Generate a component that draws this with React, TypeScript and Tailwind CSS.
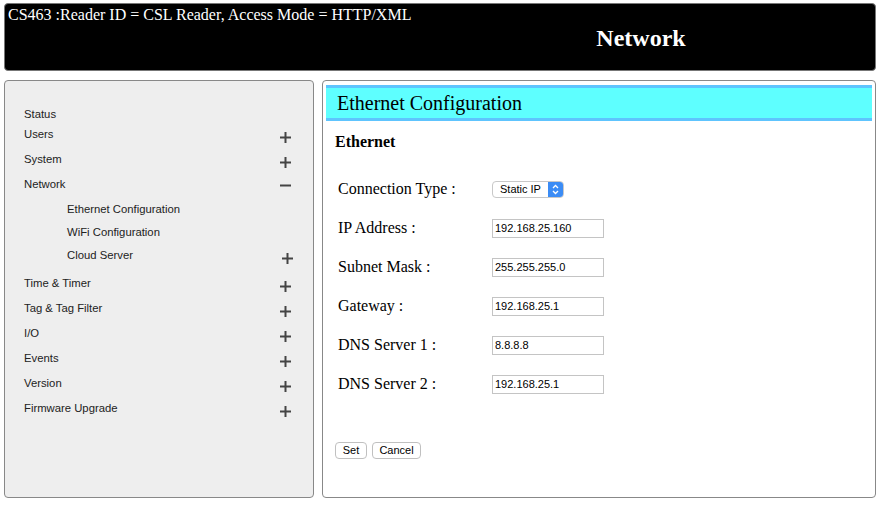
import React from 'react';

const serif = { fontFamily: '"Liberation Serif", "Times New Roman", serif' };
const sans = { fontFamily: '"Liberation Sans", Arial, sans-serif' };

const Plus = () => (
  <svg width="11" height="11" viewBox="0 0 11 11" className="flex-none translate-y-[3px]">
    <rect x="0" y="4.5" width="11" height="2" fill="#444" />
    <rect x="4.5" y="0" width="2" height="11" fill="#444" />
  </svg>
);

const Minus = () => (
  <svg width="11" height="11" viewBox="0 0 11 11" className="flex-none translate-y-[1px]">
    <rect x="0" y="4.5" width="11" height="2" fill="#444" />
  </svg>
);

type Item = { label: string; mt: string; icon?: 'plus' | 'minus'; sub?: boolean };

const menu: Item[] = [
  { label: 'Status', mt: 'mt-0' },
  { label: 'Users', mt: 'mt-[7px]', icon: 'plus' },
  { label: 'System', mt: 'mt-[12px]', icon: 'plus' },
  { label: 'Network', mt: 'mt-[12px]', icon: 'minus' },
  { label: 'Ethernet Configuration', mt: 'mt-[12px]', sub: true },
  { label: 'WiFi Configuration', mt: 'mt-[10px]', sub: true },
  { label: 'Cloud Server', mt: 'mt-[10px]', sub: true, icon: 'plus' },
  { label: 'Time & Timer', mt: 'mt-[15px]', icon: 'plus' },
  { label: 'Tag & Tag Filter', mt: 'mt-[12px]', icon: 'plus' },
  { label: 'I/O', mt: 'mt-[12px]', icon: 'plus' },
  { label: 'Events', mt: 'mt-[12px]', icon: 'plus' },
  { label: 'Version', mt: 'mt-[12px]', icon: 'plus' },
  { label: 'Firmware Upgrade', mt: 'mt-[12px]', icon: 'plus' },
];

const fields = [
  { label: 'IP Address :', value: '192.168.25.160' },
  { label: 'Subnet Mask :', value: '255.255.255.0' },
  { label: 'Gateway :', value: '192.168.25.1' },
  { label: 'DNS Server 1 :', value: '8.8.8.8' },
  { label: 'DNS Server 2 :', value: '192.168.25.1' },
];

export default function App() {
  return (
    <div className="w-[880px] h-[505px] bg-white overflow-hidden">
      {/* header */}
      <div
        className="mx-[4px] mt-[3px] h-[68px] bg-black border border-[#777] rounded-[4px] text-white pl-[3px] pt-[2px]"
        style={serif}
      >
        <div className="text-[16px] leading-[18px]">
          CS463 :Reader ID = CSL Reader, Access Mode = HTTP/XML
        </div>
        <div className="flex">
          <div className="ml-auto w-[468px] text-center text-[24px] font-bold leading-[28px]">
            Network
          </div>
        </div>
      </div>

      <div className="flex mx-[4px] mt-[9px] gap-[8px]">
        {/* side menu */}
        <div
          className="w-[310px] h-[418px] bg-[#eeeeee] border border-[#888] rounded-[4px] pt-[27px] text-[11.3px] text-[#222]"
          style={sans}
        >
          {menu.map((m) => (
            <div
              key={m.label}
              className={`flex items-center h-[13px] leading-[13px] ${m.mt} ${
                m.sub ? 'pl-[62px] pr-[20px]' : 'pl-[19px] pr-[22px]'
              }`}
            >
              <span className="flex-1">{m.label}</span>
              {m.icon === 'plus' && <Plus />}
              {m.icon === 'minus' && <Minus />}
            </div>
          ))}
        </div>

        {/* content */}
        <div className="flex-1 h-[418px] bg-white border border-[#888] rounded-[4px] pt-[4px] px-[3px]">
          <div
            className="h-[36px] bg-[#5effff] border-t-[3px] border-b-[3px] border-[#5ec4fe] pl-[11px] text-[20px] leading-[30px] text-black"
            style={serif}
          >
            Ethernet Configuration
          </div>

          <div className="pl-[9px] mt-[12px] text-[16px] font-bold leading-[18px]" style={serif}>
            Ethernet
          </div>

          <div className="pl-[12px] mt-[28px]">
            <div className="flex items-center h-[20px]">
              <div className="w-[154px] text-[16px] leading-[18px]" style={serif}>
                Connection Type :
              </div>
              <div
                className="flex items-center w-[72px] h-[17px] border border-[#c8c8c8] rounded-[4px] bg-white text-[11px] overflow-hidden"
                style={sans}
              >
                <span className="flex-1 pl-[7px] leading-[15px]">Static IP</span>
                <div className="w-[15px] h-full bg-[#3b8cf5] flex items-center justify-center">
                  <svg width="7" height="11" viewBox="0 0 7 11">
                    <path d="M1 4 L3.5 1.5 L6 4 M1 7 L3.5 9.5 L6 7" stroke="white" strokeWidth="1.3" fill="none" />
                  </svg>
                </div>
              </div>
            </div>

            {fields.map((f) => (
              <div key={f.label} className="flex items-center h-[20px] mt-[19px]">
                <div className="w-[154px] text-[16px] leading-[18px]" style={serif}>
                  {f.label}
                </div>
                <div
                  className="w-[112px] h-[19px] border border-[#c4c4c4] bg-white text-[11px] leading-[17px] pl-[2px] text-black"
                  style={sans}
                >
                  {f.value}
                </div>
              </div>
            ))}
          </div>

          <div className="flex gap-[5px] pl-[9px] mt-[48px] text-[11px]" style={sans}>
            <div className="w-[32px] h-[17px] border border-[#c0c0c0] rounded-[4px] bg-white flex items-center justify-center">
              Set
            </div>
            <div className="w-[49px] h-[17px] border border-[#c0c0c0] rounded-[4px] bg-white flex items-center justify-center">
              Cancel
            </div>
          </div>
        </div>
      </div>
    </div>
  );
}
